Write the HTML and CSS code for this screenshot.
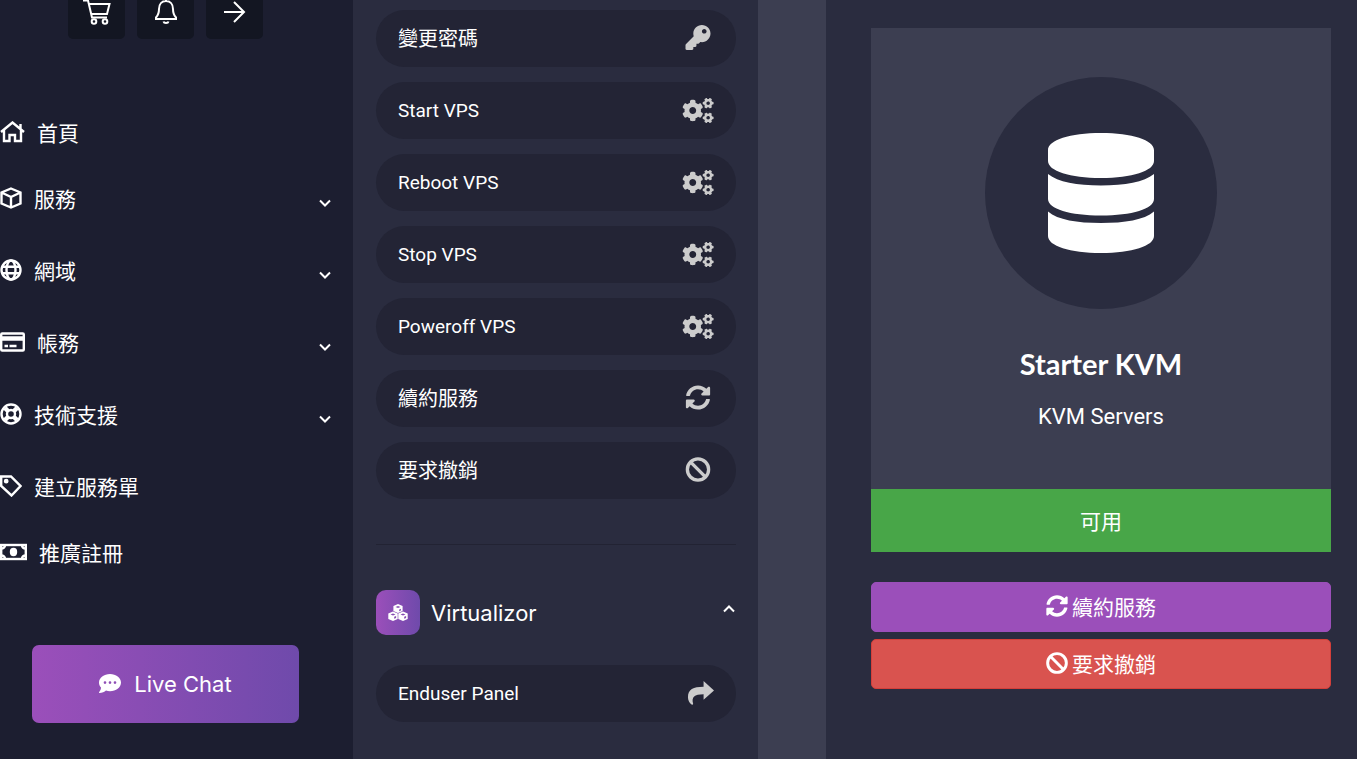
FILE: index.html
```html
<!DOCTYPE html>
<html lang="zh-Hant">
<head>
  <meta charset="UTF-8">
  <meta name="viewport" content="width=device-width, initial-scale=1.0">
  <title>Starter KVM</title>
  <link rel="stylesheet" href="styles.css">
</head>
<body>
  <svg class="sprite" aria-hidden="true">
    <symbol id="chevron" viewBox="0 0 14 10"><path d="M2 2.500l5 5 5-5" fill="none" stroke="currentColor" stroke-width="2"/></symbol>
    <symbol id="cogs" viewBox="0 0 640 512">
      <path id="gear" d="M512.1 191l-8.2 14.3c-3 5.3-9.4 7.5-15.1 5.4-11.8-4.4-22.6-10.7-32.1-18.6-4.6-3.8-5.8-10.5-2.8-15.7l8.2-14.3c-6.9-8-12.3-17.3-15.9-27.4h-16.500c-6 0-11.200-4.300-12.200-10.300-2-12-2.100-24.600 0-37.100 1-6 6.200-10.400 12.200-10.400h16.500c3.600-10.100 9-19.400 15.900-27.400l-8.200-14.300c-3-5.200-1.900-11.900 2.800-15.700 9.500-7.900 20.400-14.200 32.100-18.600 5.700-2.100 12.100.1 15.100 5.400l8.200 14.300c10.500-1.900 21.200-1.900 31.700 0L552 6.300c3-5.300 9.400-7.500 15.100-5.400 11.800 4.400 22.600 10.700 32.100 18.600 4.600 3.800 5.800 10.500 2.800 15.700l-8.200 14.300c6.900 8 12.300 17.300 15.900 27.400h16.500c6 0 11.200 4.300 12.200 10.300 2 12 2.100 24.600 0 37.100-1 6-6.200 10.400-12.200 10.400h-16.500c-3.600 10.100-9 19.400-15.900 27.400l8.200 14.300c3 5.200 1.900 11.900-2.800 15.700-9.500 7.900-20.400 14.200-32.100 18.600-5.700 2.100-12.100-.1-15.100-5.400l-8.200-14.300c-10.400 1.900-21.200 1.900-31.700 0zm-10.500-58.800c38.500 29.600 82.400-14.300 52.800-52.800-38.500-29.700-82.400 14.300-52.800 52.800z"/>
      <use href="#gear" y="300"/>
      <use href="#gear" transform="translate(212 256) rotate(90) scale(1.950) translate(-528 -106)"/>
    </symbol>
    <symbol id="refresh" viewBox="0 0 512 512"><path d="M370.720 133.280C339.458 104.008 298.888 87.962 255.848 88c-77.458.068-144.328 53.178-162.791 126.850-1.344 5.363-6.122 9.150-11.651 9.150H24.103c-7.498 0-13.194-6.807-11.807-14.176C33.933 94.924 134.813 8 256 8c66.448 0 126.791 26.136 171.315 68.685L463.030 40.970C478.149 25.851 504 36.559 504 57.941V192c0 13.255-10.745 24-24 24H345.941c-21.382 0-32.090-25.851-16.971-40.971l41.750-41.749zM32 296h134.059c21.382 0 32.090 25.851 16.971 40.971l-41.750 41.750c31.262 29.273 71.835 45.319 114.876 45.280 77.418-.07 144.315-53.144 162.787-126.849 1.344-5.363 6.122-9.150 11.651-9.150h57.304c7.498 0 13.194 6.807 11.807 14.176C478.067 417.076 377.187 504 256 504c-66.448 0-126.791-26.136-171.315-68.685L48.970 471.030C33.851 486.149 8 475.441 8 454.059V320c0-13.255 10.745-24 24-24z"/></symbol>
    <symbol id="ban" viewBox="0 0 24 24"><path d="M4.700 4.700l14.600 14.600M22.200 12a10.200 10.200 0 1 1-20.400 0 10.200 10.200 0 0 1 20.400 0z" fill="none" stroke="currentColor" stroke-width="3.200"/></symbol>
  </svg>

  <div class="layout">
    <aside class="sidebar">
      <div class="shortcuts">
        <button class="shortcut" type="button" aria-label="Cart">
          <svg viewBox="0 0 30 30" class="line-icon"><path d="M1 3.500h5l4 17h15M7.500 7h20l-2.500 10H9"/><circle cx="12" cy="24.500" r="2.300"/><circle cx="23" cy="24.500" r="2.300"/></svg>
        </button>
        <button class="shortcut" type="button" aria-label="Notifications">
          <svg viewBox="0 0 30 30" class="line-icon"><path d="M5 22v-1.500c2-2 3-3.500 3-8.500 0-5 3-8 7-8s7 3 7 8c0 5 1 6.500 3 8.500V22zM12.500 24.500c.5 2 4.500 2 5 0M15 4V2.500"/></svg>
        </button>
        <button class="shortcut" type="button" aria-label="Logout">
          <svg viewBox="0 0 30 30" class="line-icon"><path d="M4 15h20M14 5l10 10-10 10"/></svg>
        </button>
      </div>

      <nav class="menu">
        <a class="menu-link" href="#">
          <svg class="menu-icon" width="25" height="22" viewBox="0 0 25 22"><path d="M1 11L12.500 1.500 24 11M4 9v11h5.500v-6h5.500v6H21V9M20.500 3v5"/></svg>
          首頁
        </a>
        <a class="menu-link has-children" href="#">
          <svg class="menu-icon" width="22" height="22" viewBox="0 0 22 22"><path d="M11 1.500l9.500 4v11L11 20.500l-9.500-4v-11zM1.500 5.500l9.500 4.500 9.500-4.500M11 10v10.500"/></svg>
          服務
          <svg class="chevron"><use href="#chevron"/></svg>
        </a>
        <a class="menu-link has-children" href="#">
          <svg class="menu-icon" width="22" height="22" viewBox="0 0 22 22"><circle cx="11" cy="11" r="9.500"/><ellipse cx="11" cy="11" rx="4.500" ry="9.500"/><path d="M2 7.800h18M2 14.200h18"/></svg>
          網域
          <svg class="chevron"><use href="#chevron"/></svg>
        </a>
        <a class="menu-link has-children" href="#">
          <svg class="menu-icon" width="25" height="20" viewBox="0 0 25 20"><rect x="1.200" y="1.500" width="22.600" height="17" rx="1"/><path d="M1 6.500h23" stroke-width="4.500"/><path d="M4.500 14h3.500M9.500 14h7" stroke-width="2.500"/></svg>
          帳務
          <svg class="chevron"><use href="#chevron"/></svg>
        </a>
        <a class="menu-link has-children" href="#">
          <svg class="menu-icon" width="22" height="22" viewBox="0 0 22 22"><circle cx="11" cy="11" r="9.500"/><circle cx="11" cy="11" r="4"/><path d="M5 5l3 3M17 5l-3 3M5 17l3-3M17 17l-3-3" stroke-width="4.500"/></svg>
          技術支援
          <svg class="chevron"><use href="#chevron"/></svg>
        </a>
        <a class="menu-link has-children" href="#">
          <svg class="menu-icon" width="22" height="22" viewBox="0 0 22 22"><path d="M1.200 1.500H11l9.500 9.500-9 9.500L1.200 11z"/><circle cx="6.200" cy="6.200" r="1.200"/></svg>
          建立服務單
        </a>
        <a class="menu-link" href="#">
          <svg class="menu-icon" width="27" height="18" viewBox="0 0 27 18"><rect x="1.200" y="2" width="24.600" height="14"/><path d="M1 5.500Q5 5.500 5 2M26 5.500Q22 5.500 22 2M1 12.500Q5 12.500 5 16M26 12.500Q22 12.500 22 16"/><ellipse cx="13.500" cy="9" rx="2.500" ry="3" fill="currentColor"/></svg>
          推廣註冊
        </a>
      </nav>

      <button class="live-chat" type="button">
        <svg width="22" height="20" viewBox="0 0 22 20"><path fill-rule="evenodd" d="M11 0c6 0 11 3.600 11 8.600s-5 8.600-11 8.600c-1.500 0-2.800-.2-4-.6C5.500 18 3 19 .5 19c-.6 0-.7-.5-.3-.9C1.500 16.500 2 15 2 13.600.7 12.200 0 10.500 0 8.600 0 3.600 5 0 11 0zM6 7.200a1.300 1.300 0 1 0 0 2.700 1.300 1.300 0 1 0 0-2.700zm5 0a1.300 1.300 0 1 0 0 2.700 1.300 1.300 0 1 0 0-2.700zm5 0a1.300 1.300 0 1 0 0 2.700 1.300 1.300 0 1 0 0-2.700z"/></svg>
        Live Chat
      </button>
    </aside>

    <section class="actions">
      <div class="action-list">
        <a class="action zh" href="#">變更密碼
          <svg viewBox="0 0 512 512"><path d="M512 176.001C512 273.203 433.202 352 336 352c-11.220 0-22.190-1.062-32.827-3.069l-24.012 27.014A23.999 23.999 0 0 1 261.223 384H224v40c0 13.255-10.745 24-24 24h-40v40c0 13.255-10.745 24-24 24H24c-13.255 0-24-10.745-24-24v-78.059c0-6.365 2.529-12.470 7.029-16.971l161.802-161.802C163.108 213.814 160 195.271 160 176 160 78.798 238.797.001 335.999 0 433.488-.001 512 78.511 512 176.001zM336 128c0 26.510 21.490 48 48 48s48-21.490 48-48-21.490-48-48-48-48 21.490-48 48z"/></svg>
        </a>
        <a class="action" href="#">Start VPS <svg><use href="#cogs"/></svg></a>
        <a class="action" href="#">Reboot VPS <svg><use href="#cogs"/></svg></a>
        <a class="action" href="#">Stop VPS <svg><use href="#cogs"/></svg></a>
        <a class="action" href="#">Poweroff VPS <svg><use href="#cogs"/></svg></a>
        <a class="action zh" href="#">續約服務 <svg><use href="#refresh"/></svg></a>
        <a class="action zh" href="#">要求撤銷 <svg><use href="#ban"/></svg></a>
      </div>

      <button class="panel-heading" type="button">
        <span class="panel-icon">
          <svg width="20" height="17" viewBox="0 0 20 17">
            <path d="M10 0l4.600 2v5L10 9 5.400 7V2zM5 7.500l4.700 2V15L5 17l-4.700-2V9.500zM15 7.500l4.700 2V15L15 17l-4.700-2V9.500z"/>
            <path class="cube-lines" d="M7.500 3L10 4l2.500-1L10 2zM11.200 5.500v1.700l1.700-.8V4.800zM2.500 10.400l2.500 1 2.500-1-2.500-1zM6.200 12.800v1.900l1.900-.8V12zM12.500 10.400l2.500 1 2.500-1-2.500-1zM16.200 12.800v1.900l1.900-.8V12z"/>
          </svg>
        </span>
        <span class="panel-title">Virtualizor</span>
        <svg class="chevron up"><use href="#chevron"/></svg>
      </button>
      <a class="action" href="#">Enduser Panel
        <svg viewBox="0 0 26 24" preserveAspectRatio="xMaxYMid"><path d="M26 9L16 0v5.500C6 5.500 1 8 1 15.500c0 3 1.500 5.500 3.500 7 .8.500 1.700.2 1.400-.8C4.300 15.500 7 12.800 16 12.700V18z"/></svg>
      </a>
    </section>

    <main class="content">
      <section class="product">
        <div class="product-card">
          <div class="product-icon">
            <svg viewBox="0 0 106 120"><path d="M0 17C0 7 22 0 53 0s53 7 53 17v11c0 10-22 17-53 17S0 38 0 28zM0 41c10 8 29 11.500 53 11.500S96 49 106 41v25c0 10-22 16.500-53 16.500S0 76 0 66zM0 78.500C10 87 29 90 53 90s43-3 53-11.500V103c0 10-22 17-53 17S0 113 0 103z"/></svg>
          </div>
          <h3>Starter KVM</h3>
          <h4>KVM Servers</h4>
        </div>
        <div class="status">可用</div>
        <div class="product-actions">
          <a class="btn btn-renew" href="#"><svg><use href="#refresh"/></svg>續約服務</a>
          <a class="btn btn-cancel" href="#"><svg><use href="#ban"/></svg>要求撤銷</a>
        </div>
      </section>
    </main>
  </div>
</body>
</html>
```
FILE: styles.css
```css
:root {
  --sidebar: #1c1e30;
  --panel: #2a2c3f;
  --surface: #3c3e51;
  --pill: #232435;
  --purple: #9b4fba;
  --violet: #6f4aab;
}

* {
  box-sizing: border-box;
}

body {
  margin: 0;
  background: var(--surface);
  color: #fff;
  font-family: Lato, "Noto Sans CJK TC", sans-serif;
  font-size: 21px;
}

a {
  color: inherit;
  text-decoration: none;
}

button {
  border: 0;
  padding: 0;
  background: none;
  color: inherit;
  font: inherit;
  cursor: pointer;
}

svg {
  flex: none;
  fill: currentColor;
}

.sprite {
  display: none;
}

.layout {
  display: grid;
  grid-template-columns: 353px 405px minmax(0, 1fr);
  min-height: 100vh;
}

/* sidebar */
.sidebar {
  background: var(--sidebar);
}

.shortcuts {
  display: flex;
  gap: 12px;
  padding-left: 68px;
}

.shortcut {
  display: flex;
  align-items: flex-end;
  justify-content: center;
  width: 57px;
  height: 39px;
  padding-bottom: 12px;
  border-radius: 0 0 5px 5px;
  background: #131622;
}

.line-icon {
  width: 30px;
  height: 30px;
  fill: none;
  stroke: currentColor;
  stroke-width: 2;
}

.menu {
  padding-top: 63px;
}

.menu-link {
  display: flex;
  align-items: center;
  gap: 12px;
  height: 60px;
  padding-right: 21px;
}

.menu-link.has-children {
  height: 72px;
}

.menu-icon {
  fill: none;
  stroke: currentColor;
  stroke-width: 2.4;
}

.chevron {
  width: 14px;
  height: 10px;
  margin: 10px 0 0 auto;
}

.live-chat {
  display: flex;
  align-items: center;
  justify-content: center;
  gap: 13px;
  width: 267px;
  height: 78px;
  margin: 63px 0 36px 32px;
  border-radius: 7px;
  background: linear-gradient(90deg, var(--purple), var(--violet));
  font-family: Inter, sans-serif;
  font-size: 22px;
}

/* service actions */
.actions {
  padding: 10px 22px 38px 23px;
  background: var(--panel);
}

.action-list {
  display: grid;
  gap: 15px;
  padding-bottom: 45px;
  border-bottom: 1px solid #222333;
}

.action {
  display: flex;
  align-items: center;
  justify-content: space-between;
  height: 57px;
  padding: 0 22px 1px;
  border-radius: 29px;
  background: var(--pill);
  font-family: Roboto, "Noto Sans CJK TC", sans-serif;
  font-size: 19px;
}

.action.zh {
  padding-bottom: 2px;
  font-size: 20px;
}

.action svg {
  width: 32px;
  height: 25px;
  color: #ccc;
}

.panel-heading {
  display: flex;
  align-items: center;
  width: 100%;
  margin: 45px 0 30px;
}

.panel-icon {
  display: grid;
  place-items: center;
  width: 44px;
  height: 45px;
  border-radius: 10px;
  background: linear-gradient(90deg, var(--purple), var(--violet));
}

.cube-lines {
  fill: #864db3;
}

.panel-title {
  margin-left: 11px;
  font-family: Inter, sans-serif;
  font-size: 22px;
}

.chevron.up {
  margin-top: 0;
  margin-bottom: 8px;
  transform: rotate(180deg);
}

/* product summary */
.content {
  padding-left: 68px;
}

.product {
  height: 100%;
  padding: 28px 26px 70px 45px;
  background: var(--panel);
}

.product-card {
  padding: 49px 20px 57px;
  background: var(--surface);
  text-align: center;
}

.product-icon {
  display: grid;
  place-items: center;
  width: 232px;
  height: 232px;
  margin: 0 auto 35px;
  border-radius: 50%;
  background: var(--panel);
}

.product-icon svg {
  width: 106px;
  height: 120px;
}

h3 {
  margin: 0 0 17px;
  font-size: 29px;
  line-height: 40px;
}

h4 {
  margin: 0;
  font-family: Roboto, sans-serif;
  font-size: 22px;
  font-weight: 400;
  line-height: 31px;
}

.status {
  margin-bottom: 30px;
  background: #48a648;
  line-height: 63px;
  text-align: center;
}

.product-actions {
  display: grid;
  gap: 7px;
}

.btn {
  display: flex;
  align-items: center;
  justify-content: center;
  gap: 4px;
  height: 50px;
  padding-bottom: 2px;
  border: 1px solid var(--purple);
  border-radius: 5px;
  background: var(--purple);
}

.btn svg {
  width: 22px;
  height: 22px;
}

.btn-cancel {
  border-color: #d43f3a;
  background: #d9534f;
}
```
